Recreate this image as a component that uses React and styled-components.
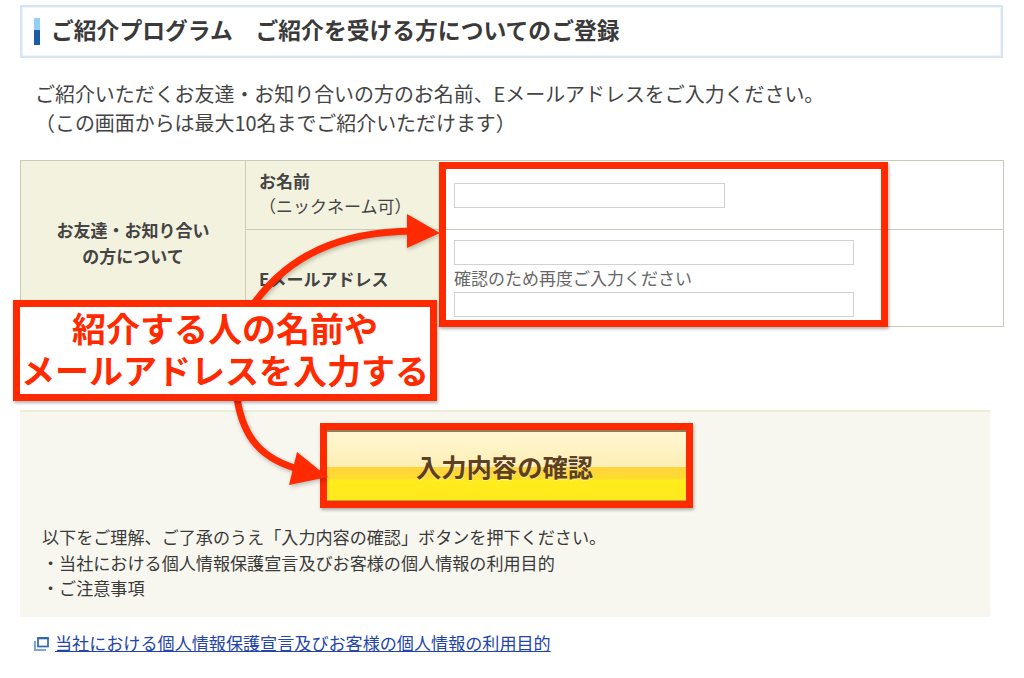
import styled, { createGlobalStyle } from "styled-components";

const GlobalStyle = createGlobalStyle`
  html, body {
    margin: 0;
    padding: 0;
    background: #fff;
  }
  body {
    font-family: "Noto Sans CJK JP", "Liberation Sans", sans-serif;
    color: #3a3a3a;
  }
`;

export default function App() {
  return (
    <Page>
      <GlobalStyle />
      <Heading>
        <Marker />
        <HeadingText>ご紹介プログラム　ご紹介を受ける方についてのご登録</HeadingText>
      </Heading>

      <Intro>
        ご紹介いただくお友達・お知り合いの方のお名前、Eメールアドレスをご入力ください。
        <br />
        （この画面からは最大10名までご紹介いただけます）
      </Intro>

      <FormTable>
        <GroupCell>
          お友達・お知り合い
          <br />
          の方について
        </GroupCell>
        <NameLabel>
          <strong>お名前</strong>
          <Note>（ニックネーム可）</Note>
        </NameLabel>
        <NameInputCell>
          <TextBox $width={271} />
        </NameInputCell>
        <MailLabel>
          <strong>Eメールアドレス</strong>
        </MailLabel>
        <MailInputCell>
          <TextBox $width={400} />
          <ConfirmText>確認のため再度ご入力ください</ConfirmText>
          <TextBox $width={400} />
        </MailInputCell>
      </FormTable>

      <ConfirmPanel>
        <ConfirmButton>入力内容の確認</ConfirmButton>
        <Notes>
          以下をご理解、ご了承のうえ「入力内容の確認」ボタンを押下ください。
          <br />
          ・当社における個人情報保護宣言及びお客様の個人情報の利用目的
          <br />
          ・ご注意事項
        </Notes>
      </ConfirmPanel>

      <LinkRow>
        <svg width="15" height="15" viewBox="0 0 15 15" fill="none">
          <path d="M1 5v9h11" stroke="#7aa6d8" strokeWidth="2" />
          <rect x="4" y="2" width="10" height="8.5" stroke="#2f66b0" strokeWidth="1.7" />
          <path d="M3.5 2.2h11" stroke="#2f66b0" strokeWidth="2.2" />
        </svg>
        <PolicyLink href="#">当社における個人情報保護宣言及びお客様の個人情報の利用目的</PolicyLink>
      </LinkRow>

      <Arrows width="1024" height="678" viewBox="0 0 1024 678" fill="none">
        <path d="M255 302C290 255 340 232 412 231" stroke="#ff2a00" strokeWidth="7" />
        <path d="M407 214L440 233L407 248Z" fill="#ff2a00" />
        <path d="M237 398C243 438 262 460 302 470" stroke="#ff2a00" strokeWidth="7" />
        <path d="M297 452L328 477L289 485Z" fill="#ff2a00" />
      </Arrows>
      <FieldsFrame />
      <Callout>
        紹介する人の名前や
        <br />
        メールアドレスを入力する
      </Callout>
    </Page>
  );
}

const Page = styled.div`
  position: relative;
  width: 1024px;
  height: 678px;
  overflow: hidden;
  padding: 5px 0 0 20px;
  box-sizing: border-box;
`;

const Heading = styled.div`
  display: flex;
  align-items: center;
  gap: 11px;
  box-sizing: border-box;
  width: 983px;
  height: 53px;
  padding-left: 12px;
  border: 2px solid #d6e4f3;
  box-shadow: inset 0 0 0 1px #eef4fa;
`;

const Marker = styled.div`
  width: 6px;
  height: 27px;
  background: linear-gradient(#93d0f2 0 45%, #1f5aa6 45% 100%);
`;

const HeadingText = styled.h1`
  margin: 0 0 4px;
  font-size: 22.8px;
  line-height: 30px;
  font-weight: 700;
  color: #3a3a3a;
  white-space: nowrap;
`;

const Intro = styled.p`
  margin: 21px 0 0 15px;
  font-size: 19.95px;
  line-height: 29px;
  color: #444;
  white-space: nowrap;
`;

const FormTable = styled.div`
  display: grid;
  grid-template-columns: 225px 194px 1fr;
  grid-template-rows: 69px 96px;
  box-sizing: border-box;
  width: 984px;
  height: 167px;
  margin-top: 23px;
  border: 1px solid #cbcbba;
  font-size: 17px;
`;

const GroupCell = styled.div`
  grid-row: 1 / 3;
  display: flex;
  align-items: center;
  justify-content: center;
  text-align: center;
  padding-bottom: 1px;
  box-sizing: border-box;
  background: #f3f2de;
  border-right: 1px solid #cbcbba;
  font-size: 17px;
  line-height: 26px;
  font-weight: 700;
  color: #444;
`;

const NameLabel = styled.div`
  display: flex;
  flex-direction: column;
  padding: 7px 0 0 13px;
  background: #f3f2de;
  border-bottom: 1px solid #cbcbba;
  line-height: 25px;
  color: #444;

  strong {
    font-size: 17px;
  }
`;

const Note = styled.span`
  font-size: 17px;
  font-weight: 400;
  white-space: nowrap;
`;

const MailLabel = styled.div`
  display: flex;
  align-items: center;
  padding: 0 0 0 13px;
  background: #f3f2de;
  font-size: 17px;
  color: #444;
`;

const NameInputCell = styled.div`
  padding: 22px 0 0 14px;
  border-bottom: 1px solid #cbcbba;
`;

const MailInputCell = styled.div`
  padding: 10px 0 0 14px;
`;

const TextBox = styled.div`
  box-sizing: border-box;
  width: ${(props) => props.$width}px;
  height: 25px;
  border: 1px solid #d2d2d2;
  background: #fff;
`;

const ConfirmText = styled.div`
  height: 27px;
  font-size: 17px;
  line-height: 25px;
  color: #666;
`;

const ConfirmPanel = styled.div`
  box-sizing: border-box;
  width: 970px;
  height: 207px;
  margin-top: 83px;
  padding: 11px 0 0 300px;
  background: #f8f7ef;
  border-top: 2px solid #eeeed8;
`;

const ConfirmButton = styled.div`
  box-sizing: border-box;
  display: flex;
  align-items: center;
  justify-content: center;
  width: 373px;
  height: 85px;
  padding-right: 4px;
  border: 7px solid #ff2a00;
  box-shadow: 1px 2px 3px rgba(0, 0, 0, 0.3);
  background-clip: padding-box;
  background-image: linear-gradient(
    #8d7f5c 0 2px,
    #fff6cf 2px 8px,
    #ffeeb4 52%,
    #ffd33d 52%,
    #ffdc30 68%,
    #ffec1c 71%,
    #ffea1e calc(100% - 1px),
    #b5a832 calc(100% - 1px)
  );
  font-size: 25.3px;
  font-weight: 700;
  color: #5c4020;
  text-shadow: 0 1px 1px rgba(255, 255, 255, 0.5);
`;

const Notes = styled.div`
  margin: 16px 0 0 -278px;
  font-size: 17.1px;
  line-height: 25.5px;
  color: #3a3a3a;
  white-space: nowrap;
`;

const LinkRow = styled.div`
  display: flex;
  align-items: center;
  gap: 6px;
  margin: 13px 0 0 14px;
  height: 26px;
`;

const PolicyLink = styled.a`
  font-size: 17.1px;
  line-height: 22px;
  color: #2344a8;
  text-decoration: underline;
  white-space: nowrap;
`;

const Arrows = styled.svg`
  position: absolute;
  top: 0;
  left: 0;
  filter: drop-shadow(1px 2px 2px rgba(0, 0, 0, 0.25));
`;

const FieldsFrame = styled.div`
  position: absolute;
  top: 162px;
  left: 439px;
  box-sizing: border-box;
  width: 449px;
  height: 165px;
  border: 7px solid #ff2a00;
  box-shadow: 1px 2px 3px rgba(0, 0, 0, 0.3);
`;

const Callout = styled.div`
  position: absolute;
  top: 300px;
  left: 13px;
  box-sizing: border-box;
  width: 424px;
  height: 101px;
  border: 7px solid #ff2a00;
  background: #fff;
  box-shadow: 1px 2px 3px rgba(0, 0, 0, 0.3);
  font-size: 34px;
  line-height: 42px;
  font-weight: 700;
  text-align: center;
  color: #ff2a00;
  white-space: nowrap;
`;
